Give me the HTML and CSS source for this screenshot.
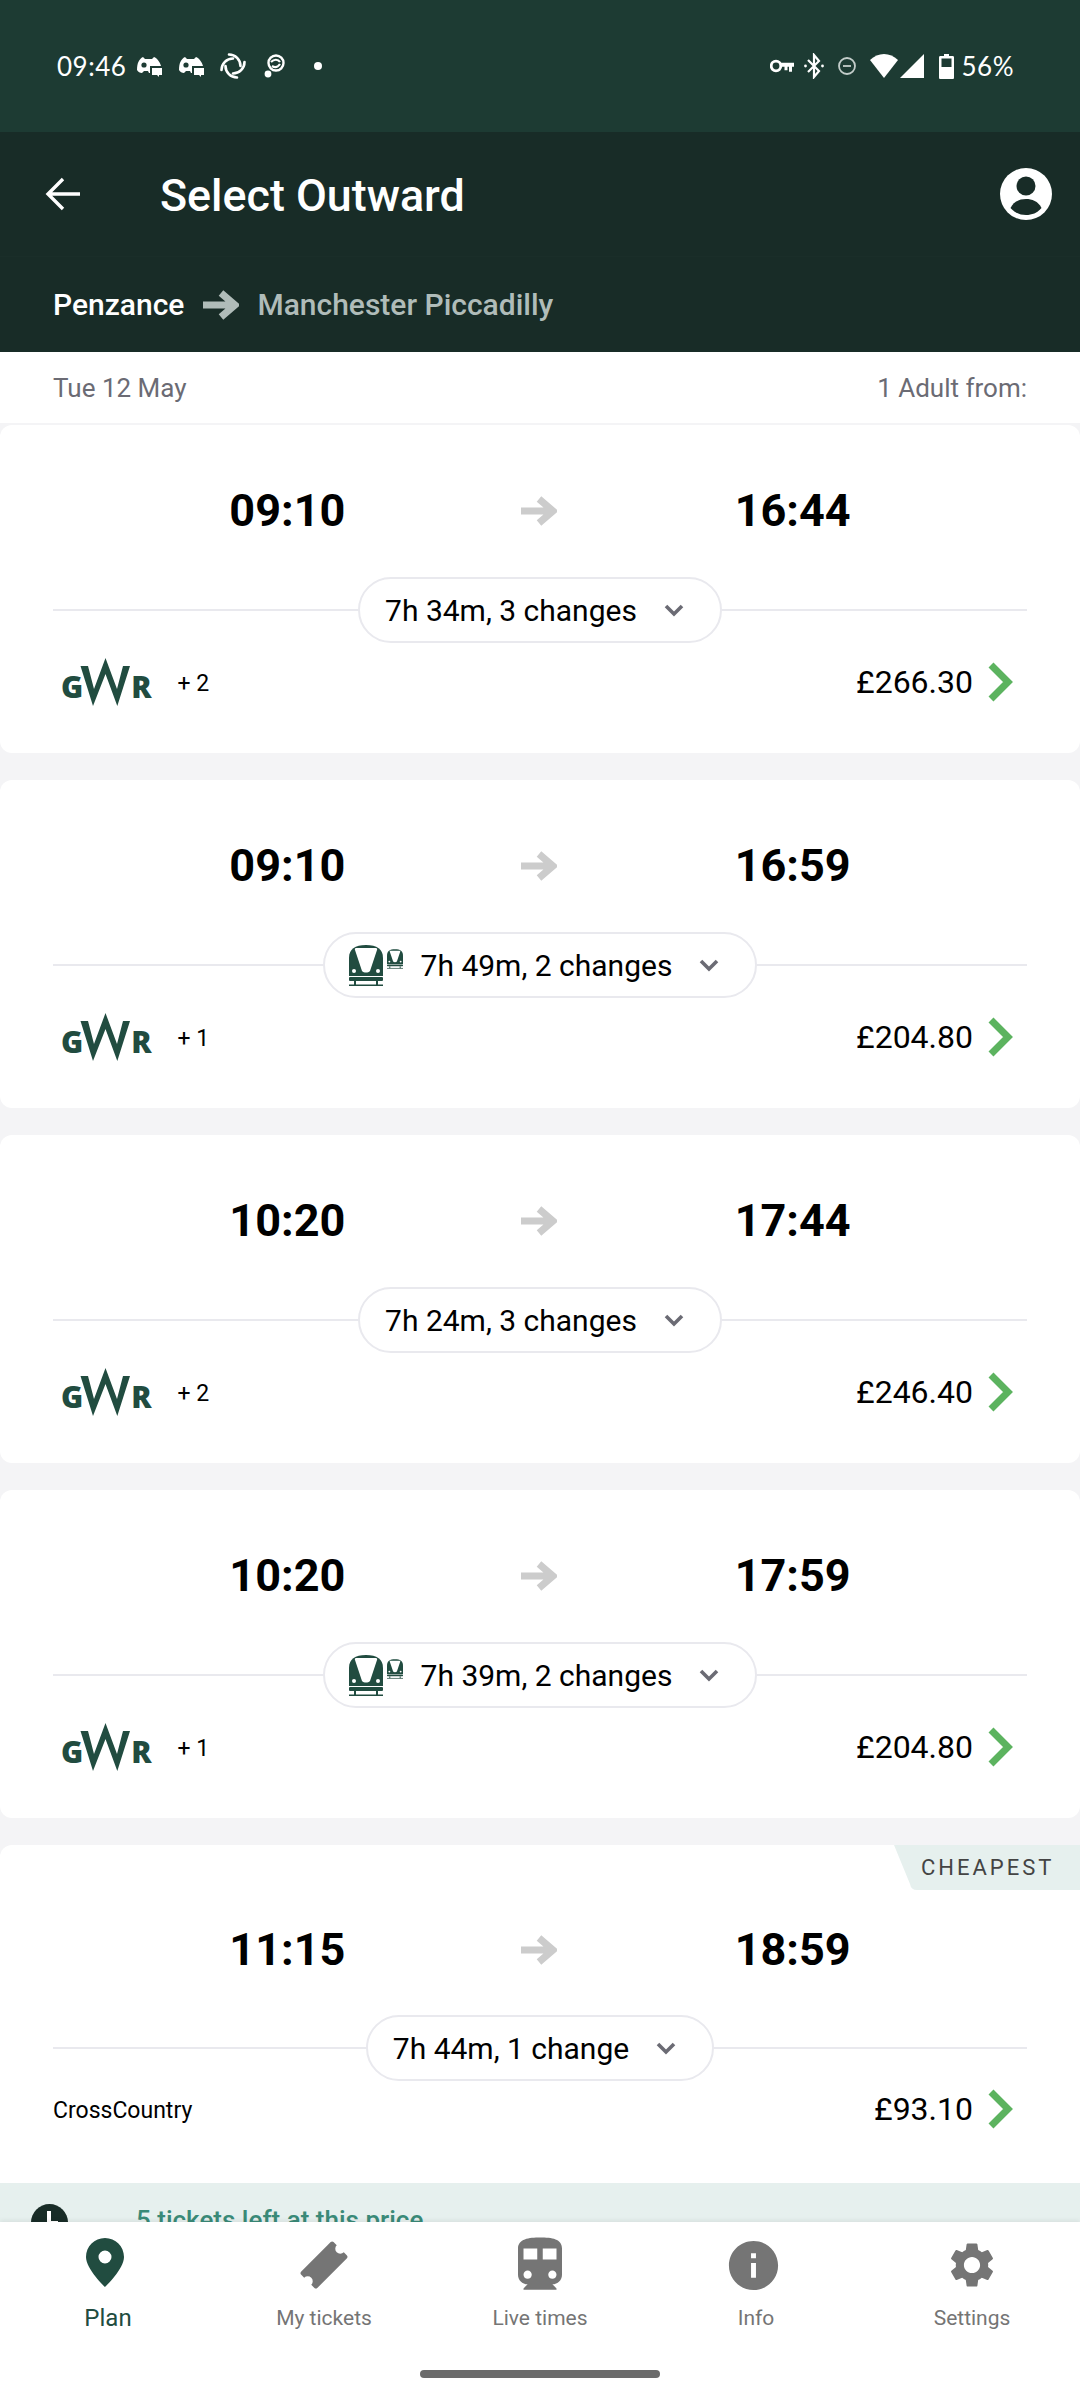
FILE: index.html
```html
<!DOCTYPE html>
<html lang="en">
<head>
    <meta charset="UTF-8">
    <meta name="viewport" content="width=device-width, initial-scale=1.0">
    <title>Select Outward</title>
    <link rel="stylesheet" href="styles.css">
</head>
<body>
    <svg class="defs" width="0" height="0">
        <symbol id="arrow-fat" viewBox="0 0 36 30">
            <path d="M0 15H31M18 3l14 12-14 12" fill="none" stroke="currentColor" stroke-width="7"/>
        </symbol>
        <symbol id="chevron" viewBox="0 0 20 13">
            <path d="M2 2l8 8 8-8" fill="none" stroke="currentColor" stroke-width="3.6"/>
        </symbol>
        <symbol id="go" viewBox="0 0 26 40">
            <path d="M3 3l17 17L3 37" fill="none" stroke="currentColor" stroke-width="7"/>
        </symbol>
        <symbol id="gwr-mark" viewBox="19 0 51 48">
            <polygon fill="#214c40" points="19.500,8 27,8 33,31 44.500,0 56,31 62,8 69,8 56.300,48 44.500,16 32,48"/>
        </symbol>
        <symbol id="train-front" viewBox="0 0 34 41">
            <path fill="#214c40" d="M0 31V13C0 4 6 0 17 0s17 4 17 13v18z"/>
            <path fill="#fff" d="M7 3h20c1 0 1.500 1 1 2l-7 21c-2 2-6 2-8 0L6 5c-.5-1 0-2 1-2z"/>
            <circle cx="5" cy="26" r="2" fill="#fff"/>
            <circle cx="29" cy="26" r="2" fill="#fff"/>
            <rect y="32" width="34" height="4" rx="1" fill="#214c40"/>
            <rect x="5" y="36" width="2" height="4" fill="#214c40"/>
            <rect x="27" y="36" width="2" height="4" fill="#214c40"/>
            <rect y="39.500" width="34" height="1.500" fill="#214c40"/>
        </symbol>
        <symbol id="discord" viewBox="0 0 26 22">
            <path fill="#fff" d="M1 15C1 8 3 4 7 2l2 2h7l2-2c3 1 6 5 7 9H14v7h-1l-1-2H8l-2 2c-2 0-4-1-5-3z"/>
            <circle cx="8" cy="10" r="2.600" fill="#1d3b33"/>
            <path fill="#fff" d="M16 13h10v7h-3v2l-2-2h-5z"/>
        </symbol>
    </svg>

    <div class="phone">
        <div class="status-bar">
            <div class="status-left">
                <span class="clock">09:46</span>
                <svg class="ic-discord" width="26" height="22"><use href="#discord"/></svg>
                <svg class="ic-discord" width="26" height="22"><use href="#discord"/></svg>
                <svg class="ic-sync" width="28" height="28" viewBox="0 0 28 28" fill="none" stroke="#fff" stroke-width="2.600" stroke-linecap="round">
                    <path d="M10 2.500A11.500 11.500 0 0 1 21.500 14"/>
                    <path d="M25.500 10A11.500 11.500 0 0 1 14 21.500"/>
                    <path d="M18 25.500A11.500 11.500 0 0 1 6.500 14"/>
                    <path d="M2.500 18A11.500 11.500 0 0 1 14 6.500"/>
                </svg>
                <svg class="ic-chat" width="22" height="24" viewBox="0 0 22 24" fill="none">
                    <circle cx="12" cy="9" r="7.500" stroke="#fff" stroke-width="2.400"/>
                    <path d="M7 8c3-3 7-3 9 0M8 12c3 2 6 1 8-2" stroke="#fff" stroke-width="2.200"/>
                    <circle cx="4" cy="20" r="3.400" fill="#fff"/>
                </svg>
                <span class="dot"></span>
            </div>
            <div class="status-right">
                <svg width="24" height="14" viewBox="0 0 24 14" fill="none">
                    <circle cx="6" cy="7" r="4.800" stroke="#fff" stroke-width="2.800"/>
                    <path d="M10 3.800h14v4h-2v5h-3v-5h-1.500v3.500h-3V7.800H10z" fill="#fff"/>
                </svg>
                <svg class="ic-bt" width="20" height="26" viewBox="0 0 20 26" fill="none">
                    <path d="M4 7l11 11-5 6V2l5 6L4 19" stroke="#fff" stroke-width="2.200"/>
                    <circle cx="1.500" cy="13" r="1.400" fill="#fff"/>
                    <circle cx="18.500" cy="13" r="1.400" fill="#fff"/>
                </svg>
                <svg class="ic-dnd" width="18" height="18" viewBox="0 0 18 18" fill="none">
                    <circle cx="9" cy="9" r="8" stroke="#c3cdca" stroke-width="1.800"/>
                    <path d="M5 9h8" stroke="#c3cdca" stroke-width="1.800"/>
                </svg>
                <svg class="ic-wifi" width="28" height="24" viewBox="0 0 28 24">
                    <path d="M0 6C4 2 9 0 14 0s10 2 14 6L14 24z" fill="#fff"/>
                </svg>
                <svg class="ic-signal" width="24" height="24" viewBox="0 0 24 24">
                    <path d="M24 0v24H0z" fill="#fff"/>
                </svg>
                <svg class="ic-battery" width="15" height="25" viewBox="0 0 15 25">
                    <path d="M5 0h5v2h3.500c1 0 1.500.5 1.500 1.500V23.500c0 1-.5 1.500-1.500 1.500h-12C.5 25 0 24.500 0 23.500V3.500C0 2.500.5 2 1.500 2H5z" fill="#fff"/>
                    <rect x="2.500" y="4.500" width="10" height="8.500" fill="#1d3b33"/>
                </svg>
                <span class="battery-pct">56%</span>
            </div>
        </div>

        <div class="toolbar">
            <svg class="back" width="36" height="36" viewBox="0 0 36 36" fill="none">
                <path d="M35 18H3M18 3L3 18l15 15" stroke="#fff" stroke-width="3.400"/>
            </svg>
            <div class="title">Select Outward</div>
            <svg class="avatar" width="52" height="52" viewBox="0 0 52 52">
                <circle cx="26" cy="26" r="26" fill="#fff"/>
                <circle cx="26" cy="18" r="9.500" fill="#182c27"/>
                <path fill="#182c27" d="M10.500 40C14 33 20 31 26 31s12 2 15.500 9C37 45 32 47 26 47s-11-2-15.500-7z"/>
            </svg>
        </div>

        <div class="route">
            <span class="route-from">Penzance</span>
            <svg class="route-arrow" width="36" height="30"><use href="#arrow-fat"/></svg>
            <span class="route-to">Manchester Piccadilly</span>
        </div>

        <div class="results">
            <div class="date-row">
                <span>Tue 12 May</span>
                <span>1 Adult from:</span>
            </div>

            <div class="card">
                <div class="times">
                    <span>09:10</span>
                    <svg class="times-arrow" width="36" height="30"><use href="#arrow-fat"/></svg>
                    <span>16:44</span>
                </div>
                <div class="duration-row">
                    <div class="pill">
                        7h 34m, 3 changes
                        <svg class="pill-chevron" width="20" height="13"><use href="#chevron"/></svg>
                    </div>
                </div>
                <div class="card-foot">
                    <div class="gwr"><span>G</span><svg width="51" height="48"><use href="#gwr-mark"/></svg><span>R</span></div>
                    <span class="extra">+ 2</span>
                    <span class="price">£266.30</span>
                    <svg class="go" width="26" height="40"><use href="#go"/></svg>
                </div>
            </div>

            <div class="card">
                <div class="times">
                    <span>09:10</span>
                    <svg class="times-arrow" width="36" height="30"><use href="#arrow-fat"/></svg>
                    <span>16:59</span>
                </div>
                <div class="duration-row">
                    <div class="pill pill-train">
                        <svg class="train-big" width="34" height="41"><use href="#train-front"/></svg>
                        <svg class="train-small" width="16" height="20"><use href="#train-front"/></svg>
                        7h 49m, 2 changes
                        <svg class="pill-chevron" width="20" height="13"><use href="#chevron"/></svg>
                    </div>
                </div>
                <div class="card-foot">
                    <div class="gwr"><span>G</span><svg width="51" height="48"><use href="#gwr-mark"/></svg><span>R</span></div>
                    <span class="extra">+ 1</span>
                    <span class="price">£204.80</span>
                    <svg class="go" width="26" height="40"><use href="#go"/></svg>
                </div>
            </div>

            <div class="card">
                <div class="times">
                    <span>10:20</span>
                    <svg class="times-arrow" width="36" height="30"><use href="#arrow-fat"/></svg>
                    <span>17:44</span>
                </div>
                <div class="duration-row">
                    <div class="pill">
                        7h 24m, 3 changes
                        <svg class="pill-chevron" width="20" height="13"><use href="#chevron"/></svg>
                    </div>
                </div>
                <div class="card-foot">
                    <div class="gwr"><span>G</span><svg width="51" height="48"><use href="#gwr-mark"/></svg><span>R</span></div>
                    <span class="extra">+ 2</span>
                    <span class="price">£246.40</span>
                    <svg class="go" width="26" height="40"><use href="#go"/></svg>
                </div>
            </div>

            <div class="card">
                <div class="times">
                    <span>10:20</span>
                    <svg class="times-arrow" width="36" height="30"><use href="#arrow-fat"/></svg>
                    <span>17:59</span>
                </div>
                <div class="duration-row">
                    <div class="pill pill-train">
                        <svg class="train-big" width="34" height="41"><use href="#train-front"/></svg>
                        <svg class="train-small" width="16" height="20"><use href="#train-front"/></svg>
                        7h 39m, 2 changes
                        <svg class="pill-chevron" width="20" height="13"><use href="#chevron"/></svg>
                    </div>
                </div>
                <div class="card-foot">
                    <div class="gwr"><span>G</span><svg width="51" height="48"><use href="#gwr-mark"/></svg><span>R</span></div>
                    <span class="extra">+ 1</span>
                    <span class="price">£204.80</span>
                    <svg class="go" width="26" height="40"><use href="#go"/></svg>
                </div>
            </div>

            <div class="card card-cheapest">
                <div class="tag">CHEAPEST</div>
                <div class="times">
                    <span>11:15</span>
                    <svg class="times-arrow" width="36" height="30"><use href="#arrow-fat"/></svg>
                    <span>18:59</span>
                </div>
                <div class="duration-row">
                    <div class="pill">
                        7h 44m, 1 change
                        <svg class="pill-chevron" width="20" height="13"><use href="#chevron"/></svg>
                    </div>
                </div>
                <div class="card-foot">
                    <span class="operator">CrossCountry</span>
                    <span class="price">£93.10</span>
                    <svg class="go" width="26" height="40"><use href="#go"/></svg>
                </div>
                <div class="notice">
                    <svg class="notice-clock" width="37" height="37" viewBox="0 0 37 37">
                        <circle cx="18.500" cy="18.500" r="18.500" fill="#182c27"/>
                        <path d="M18 7v12h9" fill="none" stroke="#fff" stroke-width="4"/>
                    </svg>
                    <span>5 tickets left at this price</span>
                </div>
            </div>
        </div>

        <div class="nav">
            <div class="nav-item active">
                <div class="nav-icon nav-icon-pin">
                    <svg width="38" height="49" viewBox="0 0 38 49">
                        <path fill="currentColor" fill-rule="evenodd" d="M19 0C8.500 0 0 8.500 0 19c0 12 19 30 19 30s19-18 19-30C38 8.500 29.500 0 19 0zm0 25.500a6.500 6.500 0 1 1 0-13 6.500 6.500 0 0 1 0 13z"/>
                    </svg>
                </div>
                <span>Plan</span>
            </div>
            <div class="nav-item">
                <div class="nav-icon">
                    <svg width="50" height="50" viewBox="0 0 50 50">
                        <path fill="currentColor" transform="rotate(-45 25 25)" d="M2 15.500c0-1 1-2 2-2h42c1 0 2 1 2 2V20a5 5 0 0 0 0 10v4.500c0 1-1 2-2 2H4c-1 0-2-1-2-2V30a5 5 0 0 0 0-10z"/>
                    </svg>
                </div>
                <span>My tickets</span>
            </div>
            <div class="nav-item">
                <div class="nav-icon">
                    <svg width="66" height="66" viewBox="0 0 24 24">
                        <path fill="currentColor" d="M12 2c-4 0-8 .5-8 4v9.500C4 17.430 5.570 19 7.500 19L6 20.500v.5h12v-.5L16.500 19c1.930 0 3.500-1.570 3.500-3.500V6c0-3.500-3.580-4-8-4zM7.500 17c-.830 0-1.500-.670-1.500-1.500S6.670 14 7.500 14s1.500.670 1.500 1.500S8.330 17 7.500 17zm3.500-7H6V6h5v4zm2 0V6h5v4h-5zm3.500 7c-.830 0-1.500-.670-1.500-1.500s.670-1.500 1.500-1.500 1.500.670 1.500 1.500-.670 1.500-1.500 1.500z"/>
                    </svg>
                </div>
                <span>Live times</span>
            </div>
            <div class="nav-item">
                <div class="nav-icon nav-icon-info">
                    <svg width="59" height="59" viewBox="0 0 24 24">
                        <path fill="currentColor" d="M12 2C6.480 2 2 6.480 2 12s4.480 10 10 10 10-4.480 10-10S17.520 2 12 2zm1 15h-2v-6h2v6zm0-8h-2V7h2v2z"/>
                    </svg>
                </div>
                <span>Info</span>
            </div>
            <div class="nav-item">
                <div class="nav-icon">
                    <svg width="54" height="54" viewBox="0 0 24 24">
                        <path fill="currentColor" d="M19.140 12.940c.04-.3.06-.61.06-.94 0-.32-.02-.64-.07-.94l2.030-1.580c.18-.14.23-.41.12-.61l-1.920-3.320c-.12-.22-.37-.29-.59-.22l-2.390.96c-.5-.38-1.030-.7-1.620-.94l-.36-2.540c-.04-.24-.24-.41-.48-.41h-3.840c-.24 0-.43.17-.47.41l-.36 2.540c-.59.24-1.130.57-1.620.94l-2.390-.96c-.22-.08-.47 0-.59.22L2.740 8.870c-.12.21-.08.47.12.61l2.030 1.580c-.05.3-.09.63-.09.94s.02.64.07.94l-2.030 1.580c-.18.14-.23.41-.12.61l1.920 3.320c.12.22.37.29.59.22l2.390-.96c.5.38 1.030.7 1.620.94l.36 2.540c.05.24.24.41.48.41h3.840c.24 0 .44-.17.47-.41l.36-2.540c.59-.24 1.130-.56 1.620-.94l2.390.96c.22.08.47 0 .59-.22l1.920-3.320c.12-.22.07-.47-.12-.61l-2.010-1.580zM12 15.600c-1.980 0-3.600-1.620-3.600-3.600s1.620-3.600 3.600-3.600 3.600 1.620 3.600 3.600-1.620 3.600-3.600 3.600z"/>
                    </svg>
                </div>
                <span>Settings</span>
            </div>
            <div class="home-bar"></div>
        </div>
    </div>
</body>
</html>
```

FILE: styles.css
```css
* {
    margin: 0;
    padding: 0;
    box-sizing: border-box;
}

body {
    font-family: Roboto, "Liberation Sans", sans-serif;
    background: #ffffff;
    color: #000000;
}

svg {
    display: block;
    flex-shrink: 0;
}

.defs {
    position: absolute;
}

.phone {
    width: 1080px;
    height: 2400px;
    display: flex;
    flex-direction: column;
    overflow: hidden;
}

/* status bar */
.status-bar {
    height: 132px;
    flex-shrink: 0;
    background: #1d3b33;
    color: #ffffff;
    display: flex;
    justify-content: space-between;
    align-items: center;
    padding: 0 66px 0 57px;
}

.status-left,
.status-right {
    display: flex;
    align-items: center;
}

.clock,
.battery-pct {
    font-family: Lato, sans-serif;
    font-size: 26px;
    letter-spacing: 0.5px;
}

.ic-discord {
    margin-left: 10px;
}

.ic-discord + .ic-discord {
    margin-left: 16px;
}

.ic-sync {
    margin-left: 15px;
}

.ic-chat {
    margin-left: 17px;
}

.dot {
    width: 8px;
    height: 8px;
    border-radius: 50%;
    background: #ffffff;
    margin-left: 28px;
}

.ic-bt {
    margin-left: 10px;
}

.ic-dnd {
    margin-left: 14px;
}

.ic-wifi {
    margin-left: 14px;
}

.ic-signal {
    margin-left: 2px;
}

.ic-battery {
    margin-left: 15px;
}

.battery-pct {
    margin-left: 8px;
}

/* app bar */
.toolbar {
    height: 125px;
    flex-shrink: 0;
    background: #182c27;
    border-bottom: 1px solid #1a2e29;
    display: flex;
    align-items: center;
    padding: 0 28px 0 45px;
    color: #ffffff;
}

.title {
    margin: 2px 0 0 79px;
    font-size: 44.8px;
    font-weight: 500;
    flex: 1;
}

.route {
    height: 95px;
    flex-shrink: 0;
    background: #182c27;
    display: flex;
    align-items: center;
    padding: 0 53px;
    font-size: 30px;
    font-weight: 500;
}

.route-from {
    color: #ffffff;
}

.route-arrow {
    color: #b0bcb9;
    margin: 0 18px 0 19px;
}

.route-to {
    color: #b0bcb9;
}

/* journey list */
.results {
    flex: 1;
    min-height: 0;
    overflow: hidden;
    background: #f4f4f6;
}

.date-row {
    height: 71px;
    background: #ffffff;
    display: flex;
    justify-content: space-between;
    align-items: center;
    padding: 1px 53px 0;
    margin-bottom: 2px;
    font-size: 26px;
    color: #6b6b74;
}

.card {
    position: relative;
    height: 328px;
    background: #ffffff;
    border-radius: 12px;
    margin-bottom: 27px;
    padding: 60px 0 0;
}

.card-cheapest {
    height: auto;
    padding-top: 79px;
    margin-bottom: 0;
}

.times {
    display: grid;
    grid-template-columns: repeat(3, 1fr);
    justify-items: center;
    align-items: center;
    padding: 0 161px;
    height: 52px;
    font-size: 45px;
    font-weight: 700;
    line-height: 52px;
}

.times-arrow {
    color: #cccccc;
    margin-right: 2px;
}

.duration-row {
    display: flex;
    align-items: center;
    margin: 40px 53px 0;
}

.card-cheapest .duration-row {
    margin-top: 39px;
}

.duration-row::before,
.duration-row::after {
    content: '';
    flex: 1;
    height: 2px;
    background: #e9e9ee;
}

.pill {
    height: 66px;
    border: 2px solid #e9e9ee;
    border-radius: 33px;
    display: flex;
    align-items: center;
    padding: 0 36px 0 25px;
    font-size: 30px;
    white-space: nowrap;
}

.pill-train {
    padding-left: 24px;
}

.pill-chevron {
    color: #6b6b74;
    margin-left: 27px;
}

.train-big {
    margin-right: 4px;
}

.train-small {
    margin: 0 18px 12px 0;
}

.card-foot {
    display: flex;
    align-items: center;
    height: 50px;
    margin-top: 14px;
    padding: 0 66px 0 62px;
}

/* operator logo: letters either side of the zigzag */
.gwr {
    display: flex;
    align-items: flex-end;
    height: 48px;
    margin-left: -1px;
    font-family: "Open Sans", sans-serif;
    font-weight: 800;
    font-size: 30px;
    line-height: 30px;
    color: #214c40;
}

.gwr span {
    margin-bottom: 4px;
}

.gwr svg {
    margin-left: -3px;
}

.extra {
    font-size: 23px;
    margin: 3px 0 0 26px;
}

.operator {
    font-size: 23px;
    margin: 2px 0 0 -9px;
}

.price {
    margin-left: auto;
    font-size: 32px;
}

.go {
    color: #5cb35f;
    margin-left: 15px;
}

.card-cheapest .card-foot {
    margin-top: 3px;
}

.tag {
    position: absolute;
    top: 0;
    right: 0;
    height: 45px;
    width: 186px;
    background: #e6f0ee;
    clip-path: path('M0 0H186V45H23Q17 45 16 39Z');
    font-size: 22px;
    letter-spacing: 3px;
    color: #444444;
    display: flex;
    align-items: center;
    padding-left: 27px;
}

.notice {
    display: flex;
    align-items: flex-start;
    height: 80px;
    margin-top: 49px;
    background: #e6f0ee;
    padding: 21px 0 0 31px;
    font-size: 26px;
    font-weight: 500;
    line-height: 32px;
    color: #3a8a78;
}

.notice-clock {
    margin-right: 68px;
}

/* bottom tabs */
.nav {
    position: relative;
    height: 178px;
    flex-shrink: 0;
    background: #ffffff;
    box-shadow: 0 -2px 4px rgba(0, 0, 0, 0.06);
    display: grid;
    grid-template-columns: repeat(5, 1fr);
    align-items: start;
    padding-top: 10px;
}

.nav-item {
    display: flex;
    flex-direction: column;
    align-items: center;
    color: #757575;
    font-size: 21px;
    line-height: 26px;
}

.nav-item.active {
    color: #214c40;
    font-size: 24px;
}

.nav-icon {
    height: 66px;
    display: flex;
    align-items: center;
    justify-content: center;
}

.nav-icon-pin {
    margin: -3px 7px 3px 0;
}

.nav-icon-info {
    margin-right: 5px;
}

.nav-item span {
    margin-top: 7px;
}

.home-bar {
    position: absolute;
    left: 420px;
    bottom: 22px;
    width: 240px;
    height: 8px;
    border-radius: 4px;
    background: #6b6b6b;
}
```
